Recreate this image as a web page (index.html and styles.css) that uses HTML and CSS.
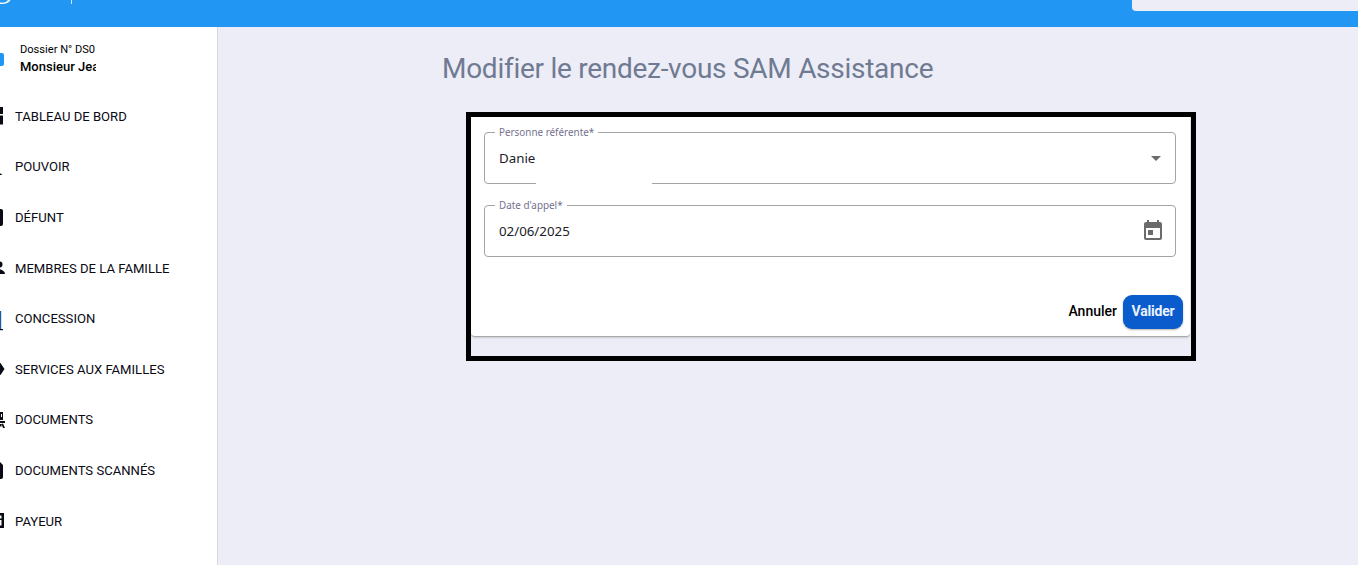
FILE: index.html
```html
<!DOCTYPE html>
<html lang="fr">
<head>
<meta charset="utf-8">
<title>Modifier le rendez-vous SAM Assistance</title>
<link rel="stylesheet" href="styles.css">
</head>
<body>
<header class="topbar">
  <div class="brand">
    <svg class="brand-logo" width="16" height="8" viewBox="0 0 16 8"><path d="M0 2.500C4 3 7 2 8 0h2.500C9 3 5 4.500 0 4z" fill="#fff"/></svg>
    <span class="brand-sep"></span>
  </div>
  <div class="search"></div>
</header>
<div class="main">
  <aside class="sidebar">
    <div class="file">
      <span class="file-mark"></span>
      <div class="file-text">
        <div class="file-no">Dossier N° DS0</div>
        <div class="file-name">Monsieur Jea</div>
      </div>
    </div>
    <nav class="nav">
      <a class="nav-item"><svg class="nav-icon" viewBox="0 0 24 24"><path d="M2 3h9v10H2zM2 15h9v6H2zM13 3h9v7h-9zM13 11.500h9v9h-9z"/></svg>TABLEAU DE BORD</a>
      <a class="nav-item"><svg class="nav-icon" viewBox="0 0 24 24"><path d="M12 11a4 4 0 1 0 0-8 4 4 0 0 0 0 8zM3 20c0-1.500 4-3 9-3s9 1.500 9 3z"/></svg>POUVOIR</a>
      <a class="nav-item"><svg class="nav-icon" viewBox="0 0 24 24"><path d="M8 4h12a2 2 0 0 1 2 2v13a2 2 0 0 1-2 2H8a2 2 0 0 1-2-2V6a2 2 0 0 1 2-2z"/></svg>DÉFUNT</a>
      <a class="nav-item"><svg class="nav-icon" viewBox="0 0 24 24"><path d="M18.500 11.500a3 3 0 1 0 0-6 3 3 0 0 0 0 6zM10 18c0-3 4-5 7-5s7 2 7 5z"/></svg>MEMBRES DE LA FAMILLE</a>
      <a class="nav-item"><svg class="nav-icon" viewBox="0 0 24 24"><path class="nav-icon-blue" d="M19 4h1.200v18H19z"/><path d="M6 22h16v1.200H6z"/></svg>CONCESSION</a>
      <a class="nav-item"><svg class="nav-icon" viewBox="0 0 24 24"><path d="M10 6h9.500l4 6-4 6H10z"/></svg>SERVICES AUX FAMILLES</a>
      <a class="nav-item"><svg class="nav-icon" viewBox="0 0 24 24"><path fill-rule="evenodd" d="M12 4h10v8H12zM20 6v3h1V6zM12 13h12v2H12zM12 16h8.500v2.500H19V20h-7zM20.500 16l1.500-.5 2 4.500h-2z"/></svg>DOCUMENTS</a>
      <a class="nav-item"><svg class="nav-icon" viewBox="0 0 24 24"><path d="M12 4h7l3 3v12a2 2 0 0 1-2 2h-8z"/></svg>DOCUMENTS SCANNÉS</a>
      <a class="nav-item"><svg class="nav-icon" viewBox="0 0 24 24"><path fill-rule="evenodd" d="M10 4h13v15H10zM10 6.500h10.500v3H10zM10 11h10.500v5.500H10z"/></svg>PAYEUR</a>
    </nav>
  </aside>
  <main class="content">
    <h1 class="title">Modifier le rendez-vous SAM Assistance</h1>
    <div class="frame">
      <form class="card">
        <fieldset class="field">
          <legend class="field-label">Personne référente*</legend>
          <span class="field-value">Danie</span>
          <svg class="field-arrow" width="10" height="5" viewBox="0 0 10 5"><path d="M0 0h10L5 5z"/></svg>
          <span class="mask"></span>
        </fieldset>
        <fieldset class="field">
          <legend class="field-label">Date d'appel*</legend>
          <span class="field-value">02/06/2025</span>
          <svg class="field-cal" width="24" height="24" viewBox="0 0 24 24"><path d="M19 4h-1V2h-2v2H8V2H6v2H5a2 2 0 0 0-2 2v14a2 2 0 0 0 2 2h14a2 2 0 0 0 2-2V6a2 2 0 0 0-2-2zm0 16H5V10h14zM7 12h5v5H7z"/></svg>
        </fieldset>
        <div class="actions">
          <button type="button" class="btn-text">Annuler</button>
          <button type="button" class="btn-primary">Valider</button>
        </div>
      </form>
    </div>
  </main>
</div>
</body>
</html>
```
FILE: styles.css
```css
* { box-sizing: border-box; }
html, body { margin: 0; height: 100%; overflow: hidden; }
body { background: #ecedf6; font-family: Roboto, "Liberation Sans", sans-serif; color: #000; display: flex; flex-direction: column; }
.topbar { height: 27px; flex: none; background: #2196f3; display: flex; justify-content: space-between; align-items: flex-start; }
.brand { display: flex; align-items: flex-start; }
.brand-logo { display: block; }
.brand-sep { width: 1px; height: 4px; background: #cfe7fb; margin-left: 55px; }
.search { width: 226px; height: 11px; background: #ecedf6; border-bottom-left-radius: 4px; }
.main { flex: 1; display: flex; min-height: 0; }
.sidebar { width: 218px; flex: none; background: #fff; border-right: 1px solid #d5d7e3; overflow: hidden; }
.file { height: 64px; position: relative; padding: 16px 0 0 20px; }
.file-mark { position: absolute; left: 0; top: 26px; width: 4px; height: 13px; background: #2196f3; border-radius: 0 2px 2px 0; }
.file-text { width: 76px; overflow: hidden; white-space: nowrap; }
.file-no { font-size: 11.100px; line-height: 14px; }
.file-name { font-size: 13px; line-height: 20px; font-weight: 500; }
.nav { display: flex; flex-direction: column; }
.nav-item { height: 50.600px; display: flex; align-items: center; font-size: 13.100px; white-space: nowrap; color: #0a0a14; }
.nav-icon { width: 24px; height: 24px; margin-left: -19px; margin-right: 10px; flex: none; fill: #0a0a14; }
.nav-icon-blue { fill: #1a5fa0; }
.content { flex: 1; min-width: 0; padding: 0 0 0 224px; }
.title { margin: 24px 0 0; font-family: Roboto, sans-serif; font-weight: 400; font-size: 28px; line-height: 36px; letter-spacing: -0.27px; color: #707a92; white-space: nowrap; }
.frame { width: 730px; height: 249px; margin: 25px 0 0 24px; border: 5px solid #000; background: #ecedf6; }
.card { height: 220px; background: #fff; border-bottom: 1px solid #a9a9a9; border-radius: 0 0 4px 4px; padding: 9px 14px 0 13px; margin-right: 1px; font-family: "Noto Sans", sans-serif; box-shadow: 0 1px 2px rgba(0,0,0,.15); }
.field { position: relative; height: 58px; margin: 0 0 15px; padding: 0 0 0 14px; border: 1px solid #a4a4a4; border-radius: 4px; min-width: 0; }
.field-label { font-size: 9.900px; line-height: 12px; color: #73718e; padding: 0 4px; margin-left: -4px; }
.field-value { position: absolute; left: 14px; top: 6px; font-size: 13.300px; line-height: 28px; color: #1c1c28; }
.field-arrow { position: absolute; right: 14px; top: 18px; fill: #6b6b6b; }
.field-cal { position: absolute; right: 10px; top: 7px; fill: #6b6b6b; }
.mask { position: absolute; left: 51px; bottom: -3px; width: 116px; height: 6px; background: #fff; }
.actions { display: flex; justify-content: flex-end; align-items: center; gap: 6px; margin-top: 38px; margin-right: -7px; }
.btn-text, .btn-primary { border: 0; font-family: Roboto, sans-serif; font-size: 14px; font-weight: 500; cursor: pointer; }
.btn-text { background: none; color: #000; padding: 0 0 2px; }
.btn-primary { width: 60px; height: 34px; background: #0a5bcc; color: #eaf2ff; border-radius: 9px; padding: 0 0 2px; font-weight: 700; letter-spacing: -0.2px; box-shadow: 0 1px 2px rgba(0,0,0,.3); }
```
